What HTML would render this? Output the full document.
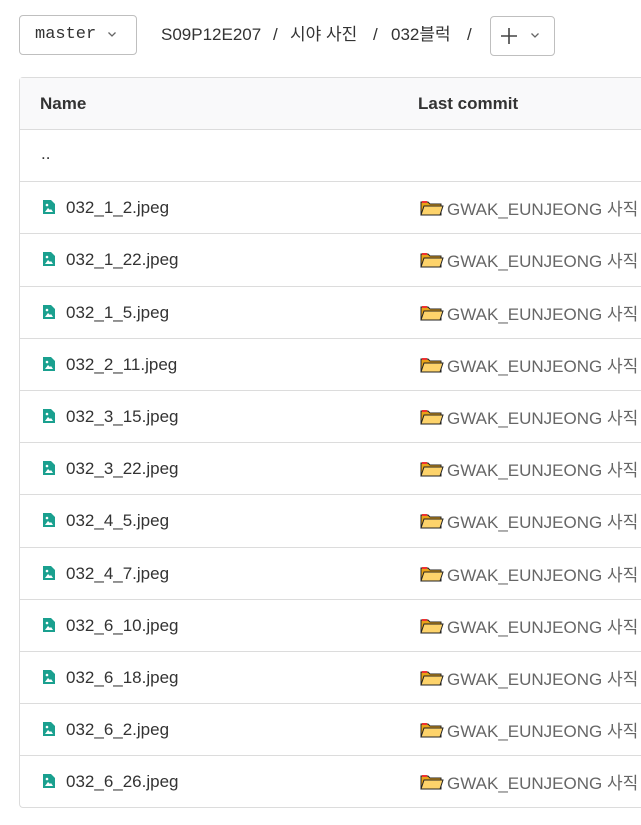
<!DOCTYPE html>
<html><head><meta charset="utf-8"><style>
body{margin:0;background:#fff;width:641px;height:825px;overflow:hidden;font-family:"Liberation Sans","Noto Sans CJK KR",sans-serif;position:relative}
.btn{position:absolute;border:1px solid #bfbfbf;border-radius:4px;box-sizing:border-box;background:#fff}
.m{left:19px;top:15px;width:118px;height:40px;font-family:"Liberation Mono","Noto Sans CJK KR",monospace;font-size:17px;color:#333;padding:9px 0 0 15px}
.p{left:490px;top:16px;width:65px;height:40px}
.bc{position:absolute;top:24px;left:161px;font-size:17px;line-height:22px;color:#333;white-space:nowrap}
.bc span{display:inline-block}
.tbl{position:absolute;left:19px;top:77px;width:640px;height:731px;border:1px solid #dcdcdc;border-radius:4px;border-right:none;box-sizing:border-box}
.hd{height:51px;background:#f9f9fa;border-bottom:1px solid #dcdcdc;position:relative;font-weight:bold;font-size:17px;color:#333}
.hd div{position:absolute;top:16px}
.row{height:51.2px;border-bottom:1px solid #dcdcdc;position:relative;font-size:17px}
.row:last-child{border-bottom:none}
.n{position:absolute;left:46px;top:16px;color:#333}
.ic{position:absolute;left:22px;top:17px}
.c{position:absolute;left:400px;top:13px;color:#666;white-space:nowrap}
.f{display:inline-block;vertical-align:-2px;margin-right:3px}
</style></head><body>
<div class="btn m">master</div>
<svg style="position:absolute;left:107px;top:31px" width="10" height="7" viewBox="0 0 10 7"><path d="M1.5 1.5l3.5 3.5 3.5-3.5" fill="none" stroke="#666" stroke-width="1.3"/></svg>
<div class="bc"><span style="width:112px">S09P12E207</span><span style="width:17px">/</span><span style="width:83px">시야 사진</span><span style="width:18px">/</span><span style="width:76px">032블럭</span><span>/</span></div>
<div class="btn p"></div>
<svg style="position:absolute;left:501px;top:28px" width="16" height="16" viewBox="0 0 16 16"><path d="M8 0v16M0 8h16" stroke="#444" stroke-width="1.6"/></svg>
<svg style="position:absolute;left:530px;top:32px" width="10" height="7" viewBox="0 0 10 7"><path d="M1.5 1.5l3.5 3.5 3.5-3.5" fill="none" stroke="#666" stroke-width="1.3"/></svg>
<div class="tbl">
<div class="hd"><div style="left:20px">Name</div><div style="left:398px">Last commit</div></div>
<div class="row"><div class="n" style="left:21px;top:14px">..</div></div>
<div class="row"><svg class="ic" width="14" height="16" viewBox="0 0 14 16"><path d="M1 1h8l4 4v10H1z" fill="#1aa08f"/><path d="M3 13l3-4 2 2 1-1 2 3z" fill="#fff"/><circle cx="5" cy="6" r="1.3" fill="#fff"/></svg><div class="n">032_1_2.jpeg</div><div class="c"><svg class="f" width="24" height="18" viewBox="0 0 24 18"><path d="M1 3h7l2 2h11v11H1z" fill="#e8a317" stroke="#222"/><path d="M1 16l3-9h19l-3 9z" fill="#fdd36b" stroke="#222"/><path d="M2 3h5" stroke="#e33" stroke-width="2"/></svg>GWAK_EUNJEONG 사직</div></div>
<div class="row"><svg class="ic" width="14" height="16" viewBox="0 0 14 16"><path d="M1 1h8l4 4v10H1z" fill="#1aa08f"/><path d="M3 13l3-4 2 2 1-1 2 3z" fill="#fff"/><circle cx="5" cy="6" r="1.3" fill="#fff"/></svg><div class="n">032_1_22.jpeg</div><div class="c"><svg class="f" width="24" height="18" viewBox="0 0 24 18"><path d="M1 3h7l2 2h11v11H1z" fill="#e8a317" stroke="#222"/><path d="M1 16l3-9h19l-3 9z" fill="#fdd36b" stroke="#222"/><path d="M2 3h5" stroke="#e33" stroke-width="2"/></svg>GWAK_EUNJEONG 사직</div></div>
<div class="row"><svg class="ic" width="14" height="16" viewBox="0 0 14 16"><path d="M1 1h8l4 4v10H1z" fill="#1aa08f"/><path d="M3 13l3-4 2 2 1-1 2 3z" fill="#fff"/><circle cx="5" cy="6" r="1.3" fill="#fff"/></svg><div class="n">032_1_5.jpeg</div><div class="c"><svg class="f" width="24" height="18" viewBox="0 0 24 18"><path d="M1 3h7l2 2h11v11H1z" fill="#e8a317" stroke="#222"/><path d="M1 16l3-9h19l-3 9z" fill="#fdd36b" stroke="#222"/><path d="M2 3h5" stroke="#e33" stroke-width="2"/></svg>GWAK_EUNJEONG 사직</div></div>
<div class="row"><svg class="ic" width="14" height="16" viewBox="0 0 14 16"><path d="M1 1h8l4 4v10H1z" fill="#1aa08f"/><path d="M3 13l3-4 2 2 1-1 2 3z" fill="#fff"/><circle cx="5" cy="6" r="1.3" fill="#fff"/></svg><div class="n">032_2_11.jpeg</div><div class="c"><svg class="f" width="24" height="18" viewBox="0 0 24 18"><path d="M1 3h7l2 2h11v11H1z" fill="#e8a317" stroke="#222"/><path d="M1 16l3-9h19l-3 9z" fill="#fdd36b" stroke="#222"/><path d="M2 3h5" stroke="#e33" stroke-width="2"/></svg>GWAK_EUNJEONG 사직</div></div>
<div class="row"><svg class="ic" width="14" height="16" viewBox="0 0 14 16"><path d="M1 1h8l4 4v10H1z" fill="#1aa08f"/><path d="M3 13l3-4 2 2 1-1 2 3z" fill="#fff"/><circle cx="5" cy="6" r="1.3" fill="#fff"/></svg><div class="n">032_3_15.jpeg</div><div class="c"><svg class="f" width="24" height="18" viewBox="0 0 24 18"><path d="M1 3h7l2 2h11v11H1z" fill="#e8a317" stroke="#222"/><path d="M1 16l3-9h19l-3 9z" fill="#fdd36b" stroke="#222"/><path d="M2 3h5" stroke="#e33" stroke-width="2"/></svg>GWAK_EUNJEONG 사직</div></div>
<div class="row"><svg class="ic" width="14" height="16" viewBox="0 0 14 16"><path d="M1 1h8l4 4v10H1z" fill="#1aa08f"/><path d="M3 13l3-4 2 2 1-1 2 3z" fill="#fff"/><circle cx="5" cy="6" r="1.3" fill="#fff"/></svg><div class="n">032_3_22.jpeg</div><div class="c"><svg class="f" width="24" height="18" viewBox="0 0 24 18"><path d="M1 3h7l2 2h11v11H1z" fill="#e8a317" stroke="#222"/><path d="M1 16l3-9h19l-3 9z" fill="#fdd36b" stroke="#222"/><path d="M2 3h5" stroke="#e33" stroke-width="2"/></svg>GWAK_EUNJEONG 사직</div></div>
<div class="row"><svg class="ic" width="14" height="16" viewBox="0 0 14 16"><path d="M1 1h8l4 4v10H1z" fill="#1aa08f"/><path d="M3 13l3-4 2 2 1-1 2 3z" fill="#fff"/><circle cx="5" cy="6" r="1.3" fill="#fff"/></svg><div class="n">032_4_5.jpeg</div><div class="c"><svg class="f" width="24" height="18" viewBox="0 0 24 18"><path d="M1 3h7l2 2h11v11H1z" fill="#e8a317" stroke="#222"/><path d="M1 16l3-9h19l-3 9z" fill="#fdd36b" stroke="#222"/><path d="M2 3h5" stroke="#e33" stroke-width="2"/></svg>GWAK_EUNJEONG 사직</div></div>
<div class="row"><svg class="ic" width="14" height="16" viewBox="0 0 14 16"><path d="M1 1h8l4 4v10H1z" fill="#1aa08f"/><path d="M3 13l3-4 2 2 1-1 2 3z" fill="#fff"/><circle cx="5" cy="6" r="1.3" fill="#fff"/></svg><div class="n">032_4_7.jpeg</div><div class="c"><svg class="f" width="24" height="18" viewBox="0 0 24 18"><path d="M1 3h7l2 2h11v11H1z" fill="#e8a317" stroke="#222"/><path d="M1 16l3-9h19l-3 9z" fill="#fdd36b" stroke="#222"/><path d="M2 3h5" stroke="#e33" stroke-width="2"/></svg>GWAK_EUNJEONG 사직</div></div>
<div class="row"><svg class="ic" width="14" height="16" viewBox="0 0 14 16"><path d="M1 1h8l4 4v10H1z" fill="#1aa08f"/><path d="M3 13l3-4 2 2 1-1 2 3z" fill="#fff"/><circle cx="5" cy="6" r="1.3" fill="#fff"/></svg><div class="n">032_6_10.jpeg</div><div class="c"><svg class="f" width="24" height="18" viewBox="0 0 24 18"><path d="M1 3h7l2 2h11v11H1z" fill="#e8a317" stroke="#222"/><path d="M1 16l3-9h19l-3 9z" fill="#fdd36b" stroke="#222"/><path d="M2 3h5" stroke="#e33" stroke-width="2"/></svg>GWAK_EUNJEONG 사직</div></div>
<div class="row"><svg class="ic" width="14" height="16" viewBox="0 0 14 16"><path d="M1 1h8l4 4v10H1z" fill="#1aa08f"/><path d="M3 13l3-4 2 2 1-1 2 3z" fill="#fff"/><circle cx="5" cy="6" r="1.3" fill="#fff"/></svg><div class="n">032_6_18.jpeg</div><div class="c"><svg class="f" width="24" height="18" viewBox="0 0 24 18"><path d="M1 3h7l2 2h11v11H1z" fill="#e8a317" stroke="#222"/><path d="M1 16l3-9h19l-3 9z" fill="#fdd36b" stroke="#222"/><path d="M2 3h5" stroke="#e33" stroke-width="2"/></svg>GWAK_EUNJEONG 사직</div></div>
<div class="row"><svg class="ic" width="14" height="16" viewBox="0 0 14 16"><path d="M1 1h8l4 4v10H1z" fill="#1aa08f"/><path d="M3 13l3-4 2 2 1-1 2 3z" fill="#fff"/><circle cx="5" cy="6" r="1.3" fill="#fff"/></svg><div class="n">032_6_2.jpeg</div><div class="c"><svg class="f" width="24" height="18" viewBox="0 0 24 18"><path d="M1 3h7l2 2h11v11H1z" fill="#e8a317" stroke="#222"/><path d="M1 16l3-9h19l-3 9z" fill="#fdd36b" stroke="#222"/><path d="M2 3h5" stroke="#e33" stroke-width="2"/></svg>GWAK_EUNJEONG 사직</div></div>
<div class="row"><svg class="ic" width="14" height="16" viewBox="0 0 14 16"><path d="M1 1h8l4 4v10H1z" fill="#1aa08f"/><path d="M3 13l3-4 2 2 1-1 2 3z" fill="#fff"/><circle cx="5" cy="6" r="1.3" fill="#fff"/></svg><div class="n">032_6_26.jpeg</div><div class="c"><svg class="f" width="24" height="18" viewBox="0 0 24 18"><path d="M1 3h7l2 2h11v11H1z" fill="#e8a317" stroke="#222"/><path d="M1 16l3-9h19l-3 9z" fill="#fdd36b" stroke="#222"/><path d="M2 3h5" stroke="#e33" stroke-width="2"/></svg>GWAK_EUNJEONG 사직</div></div>
</div>
</body></html>
